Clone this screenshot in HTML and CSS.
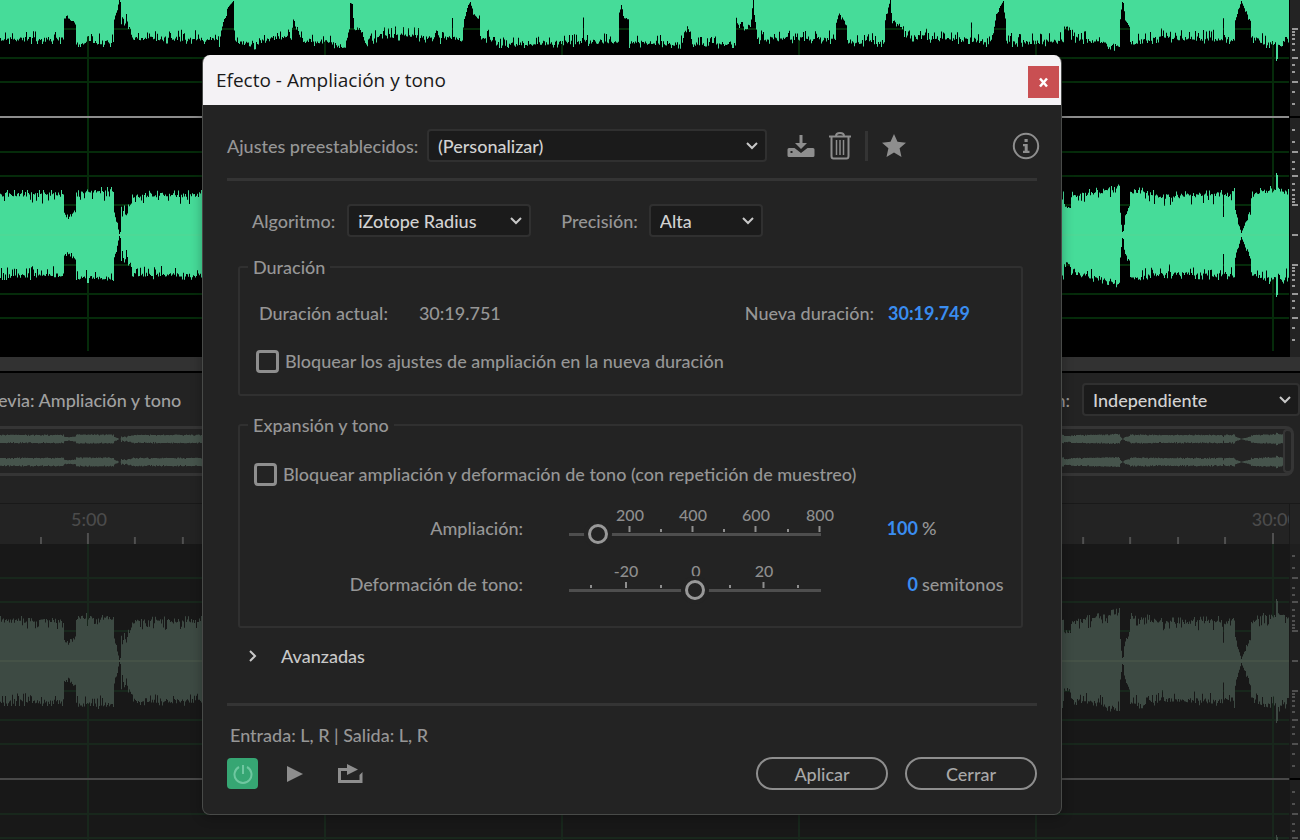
FILE: index.html
```html
<!DOCTYPE html>
<html lang="es">
<head>
    <meta charset="UTF-8">
    <meta name="viewport" content="width=device-width, initial-scale=1.0">
    <title>Efecto - Ampliación y tono</title>
    <link rel="stylesheet" href="styles.css">
</head>
<body>
    <main class="workspace">
        <section class="editor">
            <svg class="wave" id="wave-main" viewBox="0 0 1290 357" preserveAspectRatio="none"></svg>
            <svg class="scale" id="scale-main" width="10" height="357"></svg>
        </section>
        <div class="splitter"></div>
        <section class="preview">
            <div class="preview-bar">
                <h2>evia: Ampliación y tono</h2>
                <div class="field">
                    <label for="view">n:</label>
                    <span class="select select-view">
                        <select id="view"><option>Independiente</option></select>
                        <svg width="14" height="10" viewBox="0 0 14 10"><path d="M2 2l5 5 5-5"/></svg>
                    </span>
                </div>
            </div>
            <div class="overview">
                <svg id="overview" viewBox="0 0 1283 44" preserveAspectRatio="none"></svg>
                <span class="handle"></span>
            </div>
            <div class="ruler">
                <div class="ruler-body">
                    <div class="ruler-labels">
                        <span>5:00</span>
                        <span>30:00</span>
                    </div>
                    <svg id="ruler-ticks" viewBox="0 0 1290 12" preserveAspectRatio="none"></svg>
                </div>
            </div>
            <div class="editor editor-dim">
                <svg class="wave" id="wave-preview" viewBox="0 0 1290 296" preserveAspectRatio="none"></svg>
                <svg class="scale" id="scale-preview" width="10" height="296"></svg>
            </div>
        </section>
    </main>

    <div class="dialog" role="dialog" aria-labelledby="dialog-title">
        <header class="dialog-header">
            <h1 id="dialog-title">Efecto - Ampliación y tono</h1>
            <button class="close" aria-label="Cerrar ventana">
                <svg width="11" height="11" viewBox="0 0 11 11"><path d="M2 1.500l7 8M9 1.500l-7 8"/></svg>
            </button>
        </header>
        <div class="dialog-body">
            <div class="presets">
                <label for="preset">Ajustes preestablecidos:</label>
                <span class="select select-preset">
                    <select id="preset"><option>(Personalizar)</option></select>
                    <svg width="14" height="10" viewBox="0 0 14 10"><path d="M2 2l5 5 5-5"/></svg>
                </span>
                <button class="icon save" aria-label="Guardar">
                    <svg width="28" height="24" viewBox="0 0 28 24">
                        <path d="M12.500 1h3v8h4.500l-6 6-6-6h4.500z"/>
                        <path fill-rule="evenodd" d="M2 14h5.500l6.500 5 6.500-5H26q1.500 0 1.500 1.500v6q0 1.500-1.500 1.500H2Q.5 23 .5 21.500v-6Q.5 14 2 14zm1.500 3v2h2v-2z"/>
                    </svg>
                </button>
                <button class="icon trash" aria-label="Eliminar">
                    <svg width="22" height="28" viewBox="0 0 22 28">
                        <path class="line" d="M2.500 5v19q0 2.500 2 2.500h13q2 0 2-2.500V5M0 4.500h22M7 4q0-3 4-3t4 3"/>
                        <path class="line thin" d="M7.500 8v15M11 8v15M14.500 8v15"/>
                    </svg>
                </button>
                <span class="separator"></span>
                <button class="icon star" aria-label="Favorito">
                    <svg width="24" height="23" viewBox="0 0 24 23"><path d="M12 0l3.500 7.800 8.500.9-6.400 5.600L19.500 23 12 18.500 4.500 23l1.900-8.700L0 8.700l8.500-.9z"/></svg>
                </button>
                <button class="icon info" aria-label="Información">
                    <svg width="28" height="28" viewBox="0 0 28 28">
                        <circle class="line" cx="14" cy="14" r="12.200"/>
                        <path d="M12.500 7h3.200v3h-3.200zM11 12h4.700v6.800H17.500V21H11v-2.200h1.700v-4.600H11z"/>
                    </svg>
                </button>
            </div>

            <div class="algorithm">
                <label for="algorithm">Algoritmo:</label>
                <span class="select select-algorithm">
                    <select id="algorithm"><option>iZotope Radius</option></select>
                    <svg width="14" height="10" viewBox="0 0 14 10"><path d="M2 2l5 5 5-5"/></svg>
                </span>
                <label for="precision">Precisión:</label>
                <span class="select select-precision">
                    <select id="precision"><option>Alta</option></select>
                    <svg width="14" height="10" viewBox="0 0 14 10"><path d="M2 2l5 5 5-5"/></svg>
                </span>
            </div>

            <fieldset class="duration">
                <legend>Duración</legend>
                <div class="times">
                    <span>Duración actual:</span>
                    <span class="current">30:19.751</span>
                    <span class="new-label">Nueva duración:</span>
                    <button class="value">30:19.749</button>
                </div>
                <label class="check"><input type="checkbox">Bloquear los ajustes de ampliación en la nueva duración</label>
            </fieldset>

            <fieldset class="stretch">
                <legend>Expansión y tono</legend>
                <label class="check"><input type="checkbox">Bloquear ampliación y deformación de tono (con repetición de muestreo)</label>
                <div class="slider-row">
                    <label for="stretch">Ampliación:</label>
                    <div class="slider">
                        <svg width="272" height="26" viewBox="0 0 272 26">
                            <text x="71" y="13">200</text><text x="134" y="13">400</text><text x="197" y="13">600</text><text x="261" y="13">800</text>
                            <path d="M70.500 18v6M133.500 18v6M196.500 18v6M260.500 18v6M102 21v3M165 21v3M229 21v3"/>
                        </svg>
                        <input id="stretch" type="range" min="10" max="800" value="100">
                    </div>
                    <button class="value">100</button>
                    <span class="unit">%</span>
                </div>
                <div class="slider-row">
                    <label for="pitch">Deformación de tono:</label>
                    <div class="slider">
                        <svg width="272" height="26" viewBox="0 0 272 26">
                            <text x="67" y="13">-20</text><text x="137" y="13">0</text><text x="205" y="13">20</text>
                            <path d="M67 18v6M204.500 18v6M32 21v3M102 21v3M171 21v3M239 21v3"/>
                        </svg>
                        <input id="pitch" type="range" min="-36" max="36" value="0">
                    </div>
                    <button class="value">0</button>
                    <span class="unit">semitonos</span>
                </div>
            </fieldset>

            <button class="advanced" aria-expanded="false">
                <svg width="10" height="14" viewBox="0 0 10 14"><path d="M2 2l5 5-5 5"/></svg>
                Avanzadas
            </button>

            <footer class="dialog-footer">
                <p>Entrada: L, R | Salida: L, R</p>
                <div class="actions">
                    <button class="power" aria-label="Activar efecto">
                        <svg width="20" height="20" viewBox="0 0 20 20"><path d="M6 3a8.500 8.500 0 1 0 8 0M10 1v9"/></svg>
                    </button>
                    <button class="icon play" aria-label="Reproducir">
                        <svg width="16" height="16" viewBox="0 0 16 16"><path d="M0 0l16 8-16 8z"/></svg>
                    </button>
                    <button class="icon loop" aria-label="Bucle">
                        <svg width="25" height="20" viewBox="0 0 25 20">
                            <path d="M0 4h9V0l11 5.500L9 11V7H3v9h18.500v-5l3-3v11H0z"/>
                        </svg>
                    </button>
                    <button class="pill">Aplicar</button>
                    <button class="pill">Cerrar</button>
                </div>
            </footer>
        </div>
    </div>
    <script src="script.js"></script>
</body>
</html>
```
FILE: styles.css
```css
* {
    margin: 0;
    padding: 0;
    box-sizing: border-box;
}

body {
    background: #232323;
    color: #969696;
    font-family: Lato, 'Liberation Sans', sans-serif;
    font-size: 18px;
    font-weight: 500;
    line-height: 24px;
    overflow: hidden;
}

button,
select {
    font: inherit;
    color: inherit;
    background: none;
    border: none;
    cursor: pointer;
}

svg {
    display: block;
}

/* Editor */
.editor {
    display: flex;
    background: #000;
    height: 357px;
}

.wave {
    flex: 1;
    min-width: 0;
    height: 100%;
    --wave: #46dc99;
    --grid: #052b0a;
    --edge: #8c8c8c;
}

.scale {
    flex: none;
    background: #232323;
    stroke: #999;
}

.editor-dim {
    height: 296px;
    background: #181818;
}

.editor-dim .wave {
    --wave: #3d4a43;
    --grid: #18271c;
    --edge: #484848;
}

.editor-dim .scale {
    background: #1f1f1f;
    stroke: #505050;
}

.splitter {
    height: 16px;
    background: #323232;
    border-bottom: 2px solid #000;
}

/* Preview */
.preview-bar {
    display: flex;
    justify-content: space-between;
    align-items: center;
    height: 53px;
}

.preview-bar h2 {
    margin-left: -2px;
    font-size: 18px;
    font-weight: 500;
    color: #a0a0a0;
}

.field {
    display: flex;
    align-items: center;
    gap: 12px;
}

.overview {
    display: flex;
    height: 50px;
    margin-right: 6px;
    border: 3px solid #353535;
    border-left: none;
    border-radius: 0 8px 8px 0;
}

.overview svg {
    flex: 1;
    min-width: 0;
    height: 44px;
    fill: #46544c;
}

.handle {
    width: 8px;
    border: 2px solid #353535;
    border-right: none;
    border-radius: 6px;
}

.ruler {
    margin-top: 27px;
    padding-right: 10px;
    border-top: 1px solid #191919;
}

.ruler-body {
    overflow: hidden;
    height: 40px;
    border-right: 1px solid #191919;
}

.ruler-labels {
    display: flex;
    justify-content: space-between;
    height: 28px;
    padding: 3px 0 0 71px;
    margin-right: -9px;
    color: #4b4b4b;
}

.ruler-body svg {
    width: 100%;
    height: 12px;
    stroke: #505050;
}

/* Selects */
.select {
    display: grid;
    align-items: center;
}

.select select {
    grid-area: 1 / 1;
    appearance: none;
    height: 33px;
    padding: 0 9px;
    background: #1b1b1b;
    border: 2px solid #303030;
    border-radius: 4px;
    color: #d2d2d2;
}

.select svg {
    grid-area: 1 / 1;
    justify-self: end;
    margin-right: 8px;
    pointer-events: none;
    fill: none;
    stroke: #c8c8c8;
    stroke-width: 2;
}

.select-view {
    width: 218px;
}

.select-preset {
    width: 340px;
}

.select-algorithm {
    width: 184px;
}

.select-precision {
    width: 114px;
}

/* Dialog */
.dialog {
    position: absolute;
    top: 55px;
    left: 202px;
    width: 860px;
    background: #232323;
    border: 1px solid #484a48;
    border-top: none;
    border-radius: 8px;
    overflow: hidden;
    box-shadow: 0 2px 12px rgba(0, 0, 0, 0.3);
}

.dialog-header {
    display: flex;
    justify-content: space-between;
    align-items: center;
    height: 50px;
    padding: 0 2px 0 13px;
    background: #f4f2f5;
    color: #1a1a1a;
}

.dialog-header h1 {
    font-family: 'Open Sans', 'Noto Sans', sans-serif;
    font-size: 19px;
    font-weight: 400;
}

.close {
    display: grid;
    place-items: center;
    width: 31px;
    height: 32px;
    margin-top: 4px;
    background: #c94f52;
}

.close svg {
    fill: none;
    stroke: #fff;
    stroke-width: 2.5;
}

.dialog-body {
    padding: 0 24px 24px;
}

.icon {
    fill: #8e8e8e;
}

.icon .line {
    fill: none;
    stroke: #8e8e8e;
    stroke-width: 2;
}

.icon .thin {
    stroke-width: 1.5;
}

.presets {
    display: flex;
    align-items: center;
    height: 76px;
    padding-top: 8px;
    border-bottom: 3px solid #343434;
}

.select-preset {
    margin: 0 20px 0 auto;
}

.trash {
    margin: 0 14px;
}

.separator {
    width: 3px;
    height: 30px;
    background: #343434;
}

.star {
    margin: 0 106px 0 14px;
}

.info {
    margin-right: -3px;
}

.algorithm {
    display: flex;
    align-items: center;
    padding: 23px 0 18px 25px;
}

.select-algorithm {
    margin: 0 30px 0 12px;
}

.select-precision {
    margin-left: 11px;
}

fieldset {
    margin: 0 14px 0 11px;
    border: 2px solid #303030;
    border-radius: 3px;
}

legend {
    padding: 0 5px;
}

.duration {
    height: 141px;
    padding: 22px 51px 0 16px;
}

.duration legend {
    margin-left: -8px;
}

.times {
    display: flex;
    padding-left: 3px;
    margin-bottom: 24px;
}

.current {
    margin-left: 31px;
}

.new-label {
    margin: 0 14px 0 auto;
}

.value {
    color: #3a8df0;
    font-weight: 700;
}

.check {
    display: flex;
    align-items: center;
    gap: 6px;
}

.check input {
    appearance: none;
    width: 23px;
    height: 23px;
    border: 3px solid #8e8e8e;
    border-radius: 4px;
}

.stretch {
    height: 215px;
    margin-top: 17px;
    padding: 25px 15px 0 14px;
}

.stretch legend {
    margin-left: -6px;
}

.slider-row {
    display: grid;
    grid-template-columns: 269px 36px 272px 87px auto;
    align-items: center;
    height: 56px;
    text-align: right;
}

.slider-row .value {
    text-align: right;
}

.slider-row .unit {
    padding-left: 4px;
    text-align: left;
}

.slider {
    grid-column: 3;
    margin-bottom: 4px;
}

.stretch .check {
    margin-bottom: 14px;
}

.slider svg {
    overflow: visible;
    fill: #8e8e8e;
}

.slider path {
    stroke: #8e8e8e;
    stroke-width: 2;
}

.slider text {
    font-size: 16px;
    text-anchor: middle;
}

.slider input {
    display: block;
    appearance: none;
    width: 272px;
    height: 20px;
    margin-top: -10px;
    background: linear-gradient(#4e4e4e, #4e4e4e) center / 252px 3px no-repeat;
}

.slider input::-webkit-slider-thumb {
    appearance: none;
    width: 20px;
    height: 20px;
    border: 3px solid #989898;
    border-radius: 50%;
    background: #232323;
    box-shadow: 0 0 0 4px #232323;
}

.advanced {
    display: flex;
    align-items: center;
    gap: 23px;
    margin: 16px 0 0 21px;
    color: #c8c8c8;
}

.advanced svg {
    fill: none;
    stroke: #c8c8c8;
    stroke-width: 2;
}

.dialog-footer {
    margin-top: 35px;
    padding-top: 17px;
    border-top: 3px solid #343434;
}

.dialog-footer p {
    padding-left: 3px;
}

.actions {
    display: flex;
    align-items: center;
    margin-top: 10px;
}

.power {
    display: grid;
    place-items: center;
    width: 31px;
    height: 31px;
    background: #36a673;
    border-radius: 4px;
}

.power svg {
    fill: none;
    stroke: #6fc7a0;
    stroke-width: 2;
}

.play {
    margin: 0 35px 0 29px;
}

.loop {
    margin-right: auto;
}

.pill {
    width: 132px;
    height: 33px;
    border: 2px solid #8e8e8e;
    border-radius: 17px;
    color: #a8a8a8;
}

.pill + .pill {
    margin-left: 17px;
}
```
FILE: script.js
```js
const WIDTH = 1290;

// envelope of the clip: [x, amplitude]
const envelope = [
    [0, 40], [63, 40], [64, 21], [68, 17], [75, 24], [76, 43], [113, 43], [114, 22], [117, 10],
    [119, 1], [120, 3], [121, 27], [122, 16], [124, 27], [126, 17], [128, 30], [130, 28], [132, 39], [210, 40], [219, 43],
    [221, 32], [223, 24], [228, 8], [233, 2], [234, 30], [236, 43], [253, 46], [270, 39], [291, 38],
    [293, 21], [298, 32], [302, 41], [330, 43], [345, 48], [349, 30], [350, 4], [352, 5],
    [354, 28], [362, 32], [365, 43], [380, 37], [410, 36], [434, 40], [436, 30], [440, 40],
    [451, 38], [452, 20], [453, 38], [462, 40], [464, 18], [468, 6], [470, 3], [473, 14],
    [479, 18], [480, 38], [495, 40], [500, 48], [520, 44], [582, 43], [583, 17], [584, 42],
    [618, 42], [619, 15], [621, 6], [623, 18], [628, 20], [629, 44], [660, 43], [683, 45],
    [684, 34], [687, 29], [690, 33], [691, 45], [735, 44], [736, 17], [739, 30], [741, 21],
    [744, 29], [750, 26], [753, 1], [755, 25], [758, 40], [800, 39], [835, 40], [836, 22],
    [839, 16], [846, 24], [847, 42], [884, 43], [885, 20], [890, 1], [892, 22], [901, 28],
    [904, 37], [950, 40], [970, 40], [971, 23], [972, 40], [990, 44], [993, 32], [996, 14],
    [1003, 2], [1005, 20], [1006, 43], [1063, 42], [1064, 29], [1070, 29], [1071, 38],
    [1100, 43], [1119, 48], [1120, 20], [1122, 3], [1123, 4], [1125, 20], [1129, 27],
    [1130, 43], [1145, 42], [1160, 38], [1222, 40], [1223, 19], [1224, 38], [1234, 42],
    [1235, 22], [1241, 2], [1246, 14], [1250, 22], [1251, 38], [1265, 44], [1275, 44],
    [1276, 62], [1277, 60], [1278, 46], [1288, 41]
];

let seed = 7;
function random() {
    seed = (seed * 16807) % 2147483647;
    return seed / 2147483647;
}

function amplitude(x) {
    let i = 1;
    while (i < envelope.length - 1 && envelope[i][0] < x) i++;
    const [x0, a0] = envelope[i - 1];
    const [x1, a1] = envelope[i];
    return a0 + (a1 - a0) * Math.min(1, (x - x0) / (x1 - x0));
}

function jitter(a) {
    if (a < 10 || a > 55) return 0;
    if (a < 34) return random() * 5 - 2;
    // mostly small steps, now and then a longer spike in or out
    const r = random();
    if (r > 0.93) return 5;
    if (r < 0.15) return -4 - random() * 5;
    return random() * 5 - 2;
}

function channel(center, factor) {
    const top = [];
    const bottom = [];
    for (let x = 0; x <= 1288; x++) {
        const a = amplitude(x);
        const up = (center - (a + jitter(a)) * factor).toFixed(1);
        const down = (center + (a + jitter(a)) * factor).toFixed(1);
        top.push(`${x} ${up}L${x + 1} ${up}`);
        bottom.unshift(`${x + 1} ${down}L${x} ${down}`);
    }
    return `<path d="M${top.join('L')}L${bottom.join('L')}Z"/>`;
}

const gridOffsets = [30, 59, 83];

function drawWave(id, centers, bottom) {
    let out = '';
    centers.forEach(c => {
        gridOffsets.forEach(o => {
            out += `<path stroke="var(--grid)" stroke-width="2" d="M0 ${c - o}H1289M0 ${c + o}H1289"/>`;
        });
    });
    for (let x = 88; x < WIDTH; x += 237) {
        out += `<path stroke="var(--grid)" stroke-width="2" d="M${x} 0V${bottom}"/>`;
    }
    const edge = centers[0] + 118;
    out += `<path stroke="var(--edge)" stroke-width="2" d="M0 ${edge}H1289"/>`;
    out += '<g fill="var(--wave)">' + centers.map(c => channel(c, 1)).join('') + '</g>';
    centers.forEach(c => {
        out += `<path stroke="#b0c080" stroke-opacity=".15" d="M0 ${c}H1289"/>`;
    });
    document.getElementById(id).innerHTML = out;
}

function drawScale(id, centers) {
    const long = [0, 30, 59, 83];
    const short = [33, 36, 40, 45, 51, 66, 73, 93, 105];
    let d = '';
    centers.forEach(c => {
        [-1, 1].forEach(s => {
            long.forEach(o => { d += `M2 ${c + s * o}h6`; });
            short.forEach(o => { d += `M2 ${c + s * o}h3`; });
        });
    });
    const edge = centers[0] + 118;
    document.getElementById(id).innerHTML =
        `<path stroke-width="2" d="${d}"/><path stroke="#000" stroke-width="2" d="M0 ${edge}h10"/>`;
}

drawWave('wave-main', [-1, 235], 351);
drawScale('scale-main', [-1, 235]);
drawWave('wave-preview', [117, 353], 296);
drawScale('scale-preview', [117, 353]);

document.getElementById('overview').innerHTML = channel(10, 0.1) + channel(33, 0.1);

let ticks = '';
for (let i = -1; i < 26; i++) {
    const x = Math.round(88 + i * 47.43);
    ticks += `M${x} 12v${i % 5 === 0 ? -11 : -7}`;
}
document.getElementById('ruler-ticks').innerHTML = `<path stroke-width="2" d="${ticks}"/>`;
```
